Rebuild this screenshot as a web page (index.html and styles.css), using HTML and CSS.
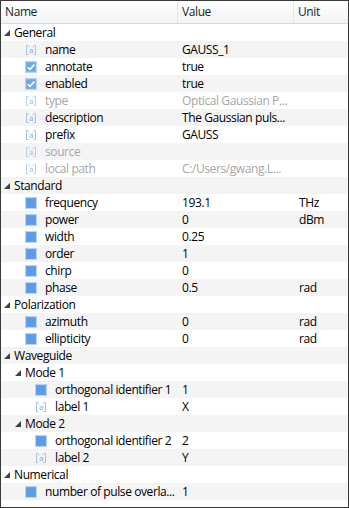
FILE: index.html
```html
<!DOCTYPE html>
<html>
<head>
<meta charset="utf-8">
<title>properties</title>
<link rel="stylesheet" href="styles.css">
</head>
<body>
<svg width="0" height="0" class="defs">
    <defs>
        <symbol id="i-str" viewBox="0 0 12 12">
            <path d="M3.5 1.5H1.5V10.5H3.5M8.5 1.5H10.5V10.5H8.5" fill="none" stroke="#a3c2e6" stroke-width="1"/>
            <text x="6" y="8.5" text-anchor="middle" font-size="7.5" font-family="DejaVu Sans" fill="#8fb3de">a</text>
            <path d="M4 2.5v1.5M8 2.5v1.5" stroke="#b3cdea" stroke-width="0.8"/>
        </symbol>
        <symbol id="i-chk" viewBox="0 0 12 12">
            <rect x="0.5" y="0.5" width="11" height="11" fill="#8fbcef" stroke="#b7d3f2"/>
            <rect x="1.5" y="1.5" width="9" height="9" fill="#6ea7ea"/>
            <path d="M2.8 6.2L5 8.4L9.3 3.6" fill="none" stroke="#ffffff" stroke-width="1.6"/>
        </symbol>
        <symbol id="i-num" viewBox="0 0 12 12">
            <rect x="0.5" y="0.5" width="11" height="11" fill="#6ea7ea" stroke="#b7d3f2"/>
            <rect x="1.5" y="1.5" width="9" height="9" fill="#5e9be6"/>
        </symbol>
        <symbol id="i-tri" viewBox="0 0 6 6">
            <polygon points="6,0 6,6 0,6" fill="#404040"/>
        </symbol>
    </defs>
</svg>

<div class="tree">
    <div class="head">
        <div class="hc">Name</div>
        <div class="hc">Value</div>
        <div class="hc">Unit</div>
    </div>

    <div class="row"><div class="nm lv0"><svg class="tri"><use href="#i-tri"/></svg>General</div><div class="val"></div><div class="unit"></div></div>
    <div class="row"><div class="nm lv1"><svg class="ico"><use href="#i-str"/></svg>name</div><div class="val">GAUSS_1</div><div class="unit"></div></div>
    <div class="row"><div class="nm lv1"><svg class="ico"><use href="#i-chk"/></svg>annotate</div><div class="val">true</div><div class="unit"></div></div>
    <div class="row"><div class="nm lv1"><svg class="ico"><use href="#i-chk"/></svg>enabled</div><div class="val">true</div><div class="unit"></div></div>
    <div class="row off"><div class="nm lv1"><svg class="ico"><use href="#i-str"/></svg>type</div><div class="val">Optical Gaussian P...</div><div class="unit"></div></div>
    <div class="row"><div class="nm lv1"><svg class="ico"><use href="#i-str"/></svg>description</div><div class="val">The Gaussian puls...</div><div class="unit"></div></div>
    <div class="row"><div class="nm lv1"><svg class="ico"><use href="#i-str"/></svg>prefix</div><div class="val">GAUSS</div><div class="unit"></div></div>
    <div class="row off"><div class="nm lv1"><svg class="ico"><use href="#i-str"/></svg>source</div><div class="val"></div><div class="unit"></div></div>
    <div class="row off"><div class="nm lv1"><svg class="ico"><use href="#i-str"/></svg>local path</div><div class="val">C:/Users/gwang.L...</div><div class="unit"></div></div>

    <div class="row"><div class="nm lv0"><svg class="tri"><use href="#i-tri"/></svg>Standard</div><div class="val"></div><div class="unit"></div></div>
    <div class="row"><div class="nm lv1"><svg class="ico"><use href="#i-num"/></svg>frequency</div><div class="val">193.1</div><div class="unit">THz</div></div>
    <div class="row"><div class="nm lv1"><svg class="ico"><use href="#i-num"/></svg>power</div><div class="val">0</div><div class="unit">dBm</div></div>
    <div class="row"><div class="nm lv1"><svg class="ico"><use href="#i-num"/></svg>width</div><div class="val">0.25</div><div class="unit"></div></div>
    <div class="row"><div class="nm lv1"><svg class="ico"><use href="#i-num"/></svg>order</div><div class="val">1</div><div class="unit"></div></div>
    <div class="row"><div class="nm lv1"><svg class="ico"><use href="#i-num"/></svg>chirp</div><div class="val">0</div><div class="unit"></div></div>
    <div class="row"><div class="nm lv1"><svg class="ico"><use href="#i-num"/></svg>phase</div><div class="val">0.5</div><div class="unit">rad</div></div>

    <div class="row"><div class="nm lv0"><svg class="tri"><use href="#i-tri"/></svg>Polarization</div><div class="val"></div><div class="unit"></div></div>
    <div class="row"><div class="nm lv1"><svg class="ico"><use href="#i-num"/></svg>azimuth</div><div class="val">0</div><div class="unit">rad</div></div>
    <div class="row"><div class="nm lv1"><svg class="ico"><use href="#i-num"/></svg>ellipticity</div><div class="val">0</div><div class="unit">rad</div></div>

    <div class="row"><div class="nm lv0"><svg class="tri"><use href="#i-tri"/></svg>Waveguide</div><div class="val"></div><div class="unit"></div></div>
    <div class="row"><div class="nm grp"><svg class="tri"><use href="#i-tri"/></svg>Mode 1</div><div class="val"></div><div class="unit"></div></div>
    <div class="row"><div class="nm lv2"><svg class="ico"><use href="#i-num"/></svg>orthogonal identifier 1</div><div class="val">1</div><div class="unit"></div></div>
    <div class="row"><div class="nm lv2"><svg class="ico"><use href="#i-str"/></svg>label 1</div><div class="val">X</div><div class="unit"></div></div>
    <div class="row"><div class="nm grp"><svg class="tri"><use href="#i-tri"/></svg>Mode 2</div><div class="val"></div><div class="unit"></div></div>
    <div class="row"><div class="nm lv2"><svg class="ico"><use href="#i-num"/></svg>orthogonal identifier 2</div><div class="val">2</div><div class="unit"></div></div>
    <div class="row"><div class="nm lv2"><svg class="ico"><use href="#i-str"/></svg>label 2</div><div class="val">Y</div><div class="unit"></div></div>

    <div class="row"><div class="nm lv0"><svg class="tri"><use href="#i-tri"/></svg>Numerical</div><div class="val"></div><div class="unit"></div></div>
    <div class="row"><div class="nm lv1"><svg class="ico"><use href="#i-num"/></svg>number of pulse overla...</div><div class="val">1</div><div class="unit"></div></div>
</div>
</body>
</html>
```

FILE: styles.css
```css
body {
    margin: 0;
    background: #ffffff;
    font-family: "Segoe UI", "Open Sans", "Noto Sans", sans-serif;
    font-size: 12px;
    letter-spacing: -0.4px;
    color: #000000;
}
.defs {
    position: absolute;
}

.tree {
    width: 347px;
    height: 506px;
    border: 1px solid #3a3a3a;
    background: #ffffff;
    overflow: hidden;
}

.head {
    display: grid;
    grid-template-columns: 177px 116px 1fr;
    height: 22px;
    background: linear-gradient(#ffffff, #f2f3f5);
    border-bottom: 1px solid #d6d9de;
}
.hc {
    padding-left: 4px;
    line-height: 22px;
    border-right: 1px solid #e3e5e8;
    color: #1e1e1e;
}
.hc:last-child {
    border-right: none;
}

.row {
    display: grid;
    grid-template-columns: 177px 116px 1fr;
    height: 17px;
    line-height: 17px;
    white-space: nowrap;
}
.row:nth-of-type(odd) {
    background: #f4f4f4;
}
.row > div {
    overflow: hidden;
}

.nm {
    display: flex;
    align-items: center;
}
.val {
    padding-left: 4px;
}
.unit {
    padding-left: 5px;
}

.lv0 { padding-left: 3px; }
.grp { padding-left: 14px; }
.lv1 { padding-left: 24px; }
.lv2 { padding-left: 34px; }

.tri {
    width: 6px;
    height: 6px;
    margin-right: 4px;
    flex: none;
}
.ico {
    width: 12px;
    height: 12px;
    margin-right: 8px;
    flex: none;
}

.off {
    color: #a7a7a7;
}
.off .ico {
    opacity: 0.75;
}
```
